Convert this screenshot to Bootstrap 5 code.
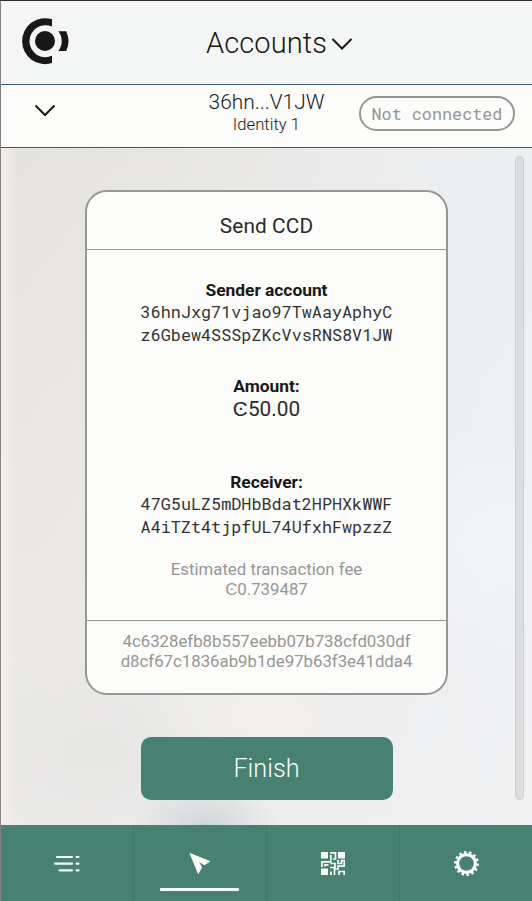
<!DOCTYPE html>
<html lang="en">
<head>
<meta charset="utf-8">
<meta name="viewport" content="width=device-width, initial-scale=1">
<title>Accounts</title>
<link href="https://cdn.jsdelivr.net/npm/bootstrap@5.3.0/dist/css/bootstrap.min.css" rel="stylesheet">
<style>
  body { font-family: Roboto, sans-serif; color: #181817; background: #fcfcfa; line-height: 1.2; }
  .wallet { height: 901px; border-top: 1px solid #302c34; border-left: 1px solid #858286; }
  .topbar { height: 84px; background: #f4f6f5; border-bottom: 1px solid #39597a; padding-left: 21px; padding-right: 21px; }
  .topbar-title { font-size: 29px; font-weight: 300; line-height: 34px; letter-spacing: .1px; }
  .brand-mark { width: 48px; margin-bottom: 1px; }
  .brand-space { width: 22px; }
  .account-bar { height: 63px; background: #fcfcfa; border-bottom: 1px solid #39597a; }
  .side-cell { width: 174px; }
  .side-chevron { padding-top: 14px; }
  .account-name { font-size: 20.9px; font-weight: 300; line-height: 24px; padding-top: 5px; }
  .identity { font-size: 16.7px; font-weight: 300; line-height: 22px; }
  .mono { font-family: "Roboto Mono", "Liberation Mono", monospace; }
  .status { width: 156px; height: 35px; border: 2px solid #969695; color: #969695; font-size: 16.8px; line-height: 32px; margin: 0 17px 2px 0; }
  .content-area {
    height: 677px;
    background:
      linear-gradient(90deg, rgba(244,241,238,.9) 0, rgba(244,241,238,0) 16px),
      radial-gradient(ellipse 75px 48px at 205px 680px, rgba(199,211,212,.85), rgba(199,211,212,0)),
      radial-gradient(ellipse 170px 110px at 100px 605px, rgba(222,223,221,.5), rgba(222,223,221,0)),
      radial-gradient(ellipse 110px 50px at 240px 570px, rgba(246,243,236,.7), rgba(246,243,236,0)),
      radial-gradient(ellipse 90px 120px at 483px 395px, rgba(246,247,249,.6), rgba(246,247,249,0)),
      linear-gradient(rgba(242,240,240,0), rgba(242,240,240,.6)),
      linear-gradient(97deg, #e3e2df 0%, #e6e5e3 25%, #ebebeb 60%, #ecf0f3 90%, #f0f1f5 100%);
  }
  .receipt { width: 363px; height: 505px; margin-top: 42px; border: 2px solid #969695; border-radius: 22px; background: #fcfcfa; }
  .receipt-title { height: 58px; padding-top: 21px; font-size: 20.8px; line-height: 27px; border-bottom: 1px solid #969695; letter-spacing: .1px; color: #2a2a29; }
  .receipt-body { height: 371px; padding-top: 29px; border-bottom: 1px solid #969695; }
  .label { font-size: 17.4px; font-weight: 700; line-height: 22px; letter-spacing: -.03px; }
  .address { font-size: 16.8px; font-weight: 400; line-height: 23px; color: #333332; margin-top: -1px; }
  .address-gap { margin-bottom: 21px; }
  .sender-gap { margin-bottom: 29px; }
  .amount { font-size: 20.8px; line-height: 24px; height: 74px; color: #2a2a29; }
  .muted { color: #969695; font-size: 16.8px; line-height: 20px; }
  .tx-hash { padding-top: 10px; }
  .btn-finish, .btn-finish:hover { width: 252px; height: 63px; margin-top: 42px; border: 0; border-radius: 10px; background: #478171; color: #fcfcfa; font-size: 25.3px; font-weight: 300; }
  .scroll-track { right: 8px; top: 8px; width: 9px; height: 644px; border-radius: 5px; background: #dcdddf; border: 1px solid #d0d1d3; }
  .tabs-bar { height: 76px; background: #478171; }
  .tab { border-right: 1px solid #3f7869; }
  .tab:last-child { border-right: 0; }
  .tab-line { bottom: 10px; left: 26px; width: 79px; height: 3px; border-radius: 1px; background: #fcfcfa; }
</style>
<script src="https://cdn.jsdelivr.net/npm/bootstrap@5.3.0/dist/js/bootstrap.bundle.min.js"></script>
</head>
<body>
<div class="wallet d-flex flex-column overflow-hidden">
  <header class="topbar d-flex align-items-center justify-content-between">
    <svg class="brand-mark" width="48" height="48" viewBox="0 0 48 48" fill="#181817">
      <circle cx="23" cy="23" r="10"/>
      <path d="M30 1.2V8.6A16 16 0 1 0 30 37.8V45.1A23 23 0 1 1 30 1.2Z"/>
      <path d="M36.3 13.2H44.2A23 23 0 0 1 44.2 33H36.3A16 16 0 0 0 36.3 13.2Z"/>
    </svg>
    <div class="d-flex align-items-center">
      <h1 class="topbar-title m-0">Accounts</h1>
      <svg class="ms-1" width="22" height="14" viewBox="0 0 22 14" fill="none" stroke="#181817" stroke-width="2"><path d="M1.5 3L11 12.500L20.500 3"/></svg>
    </div>
    <span class="brand-space"></span>
  </header>

  <section class="account-bar d-flex justify-content-between">
    <div class="side-cell side-chevron ps-4">
      <svg class="ms-2" width="23" height="15" viewBox="0 0 23 15" fill="none" stroke="#181817" stroke-width="2"><path d="M2.500 3.500L12 13L21.500 3.500"/></svg>
    </div>
    <div class="text-center">
      <div class="account-name">36hn...V1JW</div>
      <div class="identity">Identity 1</div>
    </div>
    <div class="side-cell d-flex align-items-center justify-content-end pb-1">
      <span class="status mono rounded-pill text-center text-nowrap">Not connected</span>
    </div>
  </section>

  <main class="content-area position-relative d-flex flex-column align-items-center">
    <article class="receipt text-center">
      <div class="receipt-title">Send CCD</div>
      <div class="receipt-body">
        <div class="label">Sender account</div>
        <div class="address sender-gap mono">36hnJxg71vjao97TwAayAphyC<br>z6Gbew4SSSpZKcVvsRNS8V1JW</div>
        <div class="label">Amount:</div>
        <div class="amount">Ͼ50.00</div>
        <div class="label">Receiver:</div>
        <div class="address address-gap mono">47G5uLZ5mDHbBdat2HPHXkWWF<br>A4iTZt4tjpfUL74UfxhFwpzzZ</div>
        <div class="muted">Estimated transaction fee<br>Ͼ0.739487</div>
      </div>
      <div class="muted tx-hash">4c6328efb8b557eebb07b738cfd030df<br>d8cf67c1836ab9b1de97b63f3e41dda4</div>
    </article>
    <button class="btn btn-finish" type="button">Finish</button>
    <div class="scroll-track position-absolute"></div>
  </main>

  <nav class="tabs-bar row g-0 flex-shrink-0">
    <a class="tab col d-flex align-items-center justify-content-center" href="#" aria-label="Transactions">
      <svg width="28" height="20" viewBox="0 0 28 20" fill="none" stroke="#fcfcfa" stroke-width="2.200" stroke-linecap="round"><path d="M4 4H19M2 10.600H19M6.500 17.300H19M23.500 4H25.500M23.500 10.600H25.500M23.500 17.300H25.500"/></svg>
    </a>
    <a class="tab col position-relative d-flex align-items-center justify-content-center" href="#" aria-label="Send">
      <svg width="24" height="24" viewBox="0 0 24 24" fill="#fcfcfa"><path d="M1.300 1.800L22.500 10.300L16.500 14.300L11.300 11.300L14.100 16.500L10.200 23.200Z"/></svg>
      <span class="tab-line position-absolute"></span>
    </a>
    <a class="tab col d-flex align-items-center justify-content-center" href="#" aria-label="Receive">
      <svg width="24" height="23" viewBox="0 0 24 23">
        <path fill="#fcfcfa" d="M0 0H7V6.500H0ZM17 0H24V6.500H17ZM0 16.500H7V23H0Z"/>
        <path fill="none" stroke="#fcfcfa" stroke-width="1.700" d="M9 .8H14.500V7H12M9.800 3V9.800H1V15M4 14.500V12.800H7.500M10 23V19.500M9 15.500H14V11.500H9.500M17 8V11.500H20.500V8.500H24M23.200 9V14.200H17V17H13.500V23M18 23V19.500H23.200V23"/>
      </svg>
    </a>
    <a class="tab col d-flex align-items-center justify-content-center" href="#" aria-label="Settings">
      <svg width="26" height="26" viewBox="0 0 26 26" fill="none" stroke="#fcfcfa">
        <circle cx="13.500" cy="13.500" r="8.900" stroke-width="3.200"/>
        <circle cx="13.500" cy="13.500" r="11.100" stroke-width="2.700" pathLength="140" stroke-dasharray="5 5"/>
      </svg>
    </a>
  </nav>
</div>
</body>
</html>
